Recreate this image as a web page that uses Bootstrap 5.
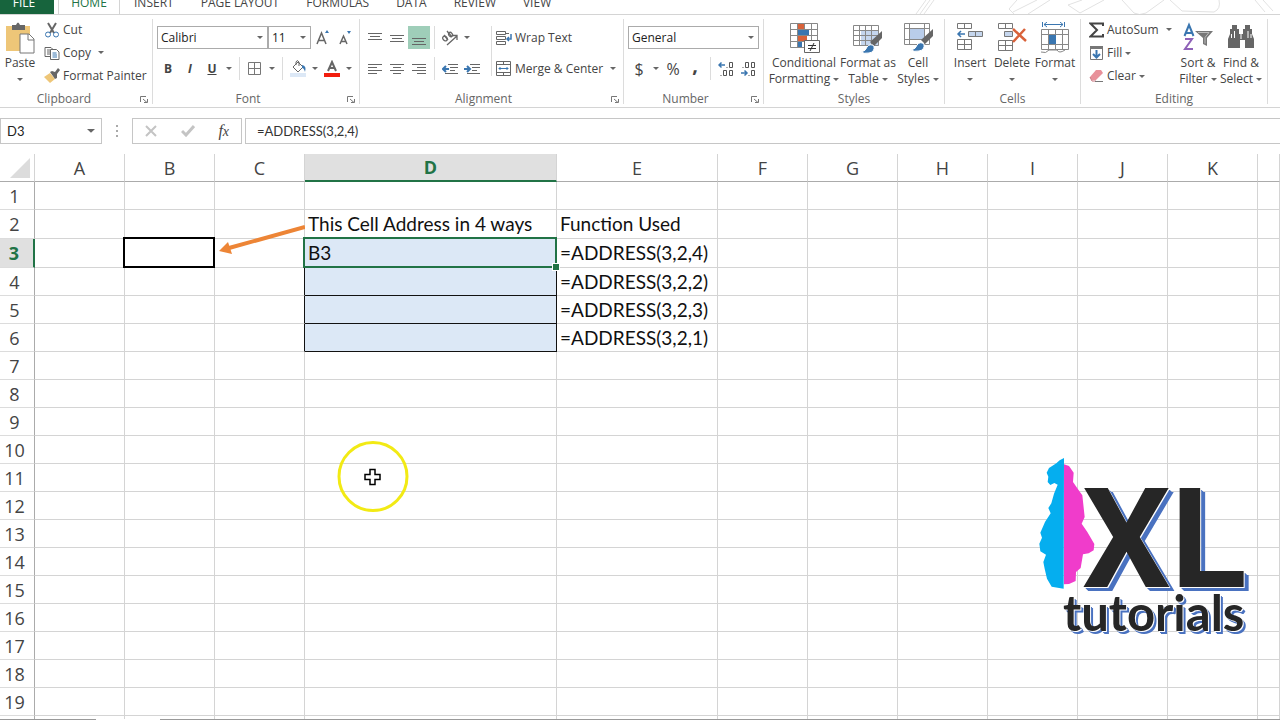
<!DOCTYPE html>
<html lang="en">
<head>
<meta charset="utf-8">
<meta name="viewport" content="width=device-width, initial-scale=1">
<title>XL tutorials - ADDRESS</title>
<link href="https://cdn.jsdelivr.net/npm/bootstrap@5.3.0/dist/css/bootstrap.min.css" rel="stylesheet">
<style>
:root{--xl-green:#217346;--xl-line:#d4d4d4;--xl-ink:#444;--xl-grey:#777;--xl-blue:#3a76b0}
body{font-family:"Open Sans","Noto Sans",sans-serif;font-size:12px;line-height:16px;color:var(--xl-ink);background:#fff}
button{font:inherit;color:inherit;background:none;border:0;padding:0;white-space:nowrap}
svg{display:block;flex:none}
/* tabs */
.tab-strip{height:15px;border-bottom:1px solid var(--xl-line)}
.tab-strip .nav-link{color:var(--xl-ink);padding:0 0 1px;line-height:20px;text-align:center;border-radius:0}
.tab-strip .file-tab{background:#17643d;color:#fff;width:54px;padding-right:6px;margin-right:4px}
.tab-strip .home-tab{color:var(--xl-green);width:62px;border:1px solid var(--xl-line);border-width:0 1px;margin-right:14px}
.tab-list{gap:27px}
.tab-art{right:0;top:0}
/* ribbon */
.ribbon{border-bottom:1px solid var(--xl-line);padding:3px 0 1px}
.ribbon-group{position:relative;height:88px;flex:none;padding-right:1px}
.ribbon-group::after{content:"";position:absolute;right:0;top:1px;bottom:2px;width:1px;background:#dcdcdc}
.g-clip{width:153px}.g-font{width:207px}.g-align{width:264px}.g-num{width:140px}.g-styles{width:181px}.g-cells{width:136px}.g-edit{width:187px}
.tool-area{height:74px}
.group-name{color:#666;line-height:13px;height:13px;text-align:center;position:relative}
.launcher{position:absolute;right:4px;top:4px}
.tool-row{height:23px}
.slot{width:22px;height:23px;display:flex;align-items:center;justify-content:center}
.drop{width:12px;height:20px;display:flex;align-items:center;justify-content:center}
.drop::after,.caret::after{content:"";display:inline-block;border:3px solid transparent;border-top-color:#666;border-bottom:0;vertical-align:2px}
.vline{width:1px;height:23px;background:#dcdcdc}
.big-tool{display:flex;flex-direction:column;align-items:center;padding-top:4px;flex:none}
.big-tool svg{height:32px;margin-bottom:1px}
.small-tool{display:flex;align-items:center;gap:3px;height:23px}
.combo{height:23px;border:1px solid #ababab;border-radius:0;padding:0 3px;font-size:12px;color:#222;appearance:none;background:#fff url("data:image/svg+xml,%3Csvg xmlns='http://www.w3.org/2000/svg' width='6' height='4'%3E%3Cpath d='M0 0h6L3 3z' fill='%23666'/%3E%3C/svg%3E") no-repeat right 4px center}
.active-tool{background:#9fceb9}
/* formula bar */
.formula-bar{padding:10px 0}
.fx-box{height:26px;border:1px solid #c6c6c6;border-radius:0;background-color:#fff;font-size:12px}
.name-box{width:102px;padding:0 6px;background-position:right 6px center;background-size:8px 5px;font-family:Lato,sans-serif;font-size:13px}
.fx-tools{width:110px}
.fx-name{font:italic 400 16px/20px "Liberation Serif",serif}
.fx-input{font-family:Lato,sans-serif;font-size:13px;padding:0 11px;color:#333;border-right:0;min-width:0;margin-left:3px}
/* sheet */
.sheet{min-height:0}
.cells{table-layout:fixed;border-collapse:separate;border-spacing:0;width:100%}
.cells th{font-weight:400;font-size:18px;line-height:26px;padding:0;text-align:center;color:var(--xl-ink)}
.cells thead th{height:28px;border-right:1px solid var(--xl-line);border-bottom:1px solid #ababab}
.cells tbody th{border-right:1px solid #ababab;border-bottom:1px solid #dcdcdc;padding-right:5px}
.cells td{font-family:Lato,sans-serif;font-size:19px;line-height:26px;padding:0 0 0 3px;color:#111;white-space:nowrap;border-right:1px solid var(--xl-line);border-bottom:1px solid var(--xl-line);position:relative}
.cells tr{height:28px}
.cells .tall{height:29px}
.cells th.current{font-weight:700;color:var(--xl-green);background:#e0e0e0}
.cells thead th.current{border-bottom:2px solid var(--xl-green)}
.cells tbody th.current{border-right:2px solid var(--xl-green)}
.cells td.answer{background:#dce8f6;border-color:#111}
.cells td.edge{border-right-color:#111}
.framed::after{content:"";position:absolute;inset:-2px -1px -1px -2px;border:2px solid #000;z-index:1}
.picked::after{border-color:var(--xl-green)}
.fill-handle{position:absolute;right:-3px;bottom:-3px;width:6px;height:6px;background:var(--xl-green);box-shadow:0 0 0 1px #fff;z-index:2}
.link-arrow{position:absolute;right:-1px;top:12px;z-index:1}
.pointer{left:336px;top:286px}
.brand{right:31px;top:303px;width:212px;height:180px;color:#262626}
.brand-face{position:absolute;left:0;top:0}
.brand-xl{position:absolute;left:45px;top:31px;font-family:Roboto,sans-serif;font-weight:700;font-size:140px;line-height:102px;text-shadow:1px 1px 0 #fff,2px 2px 0 #4a72c0,3px 3px 0 #4a72c0,4px 4px 0 #4a72c0,5px 4px 0 #4a72c0}
.brand-sub{position:absolute;left:26px;top:133px;font-family:Lato,sans-serif;font-size:49px;line-height:44px;font-weight:700;text-shadow:1px 1px 0 #fff,2px 2px 0 #4a72c0,3px 3px 0 #4a72c0}
.sheet-foot{height:1px;background:#999}
.sheet-tab{width:64px;height:1px;margin-left:96px;background:#fff}
</style>
</head>
<body class="vh-100 overflow-hidden d-flex flex-column">
<nav class="tab-strip d-flex align-items-end overflow-hidden position-relative flex-shrink-0">
  <svg class="tab-art position-absolute" width="370" height="14" viewBox="0 0 370 14" fill="none" stroke="#e2e2e2"><path d="M6 14 16 0M10 14 20 0M14 14 24 0M104 14l-5-5 8-9M103 12l24-12M118 14l22-14M172 0l-14 5 12 8 24-13M212 0l12 13q5 3 12 0l18-13M260 0l12 11 32 1q7-3 5-12M345 0l10 12M353 0l10 11"/></svg>
  <a class="nav-link file-tab" href="#">FILE</a>
  <a class="nav-link home-tab" href="#">HOME</a>
  <div class="d-flex tab-list">
    <a class="nav-link" href="#">INSERT</a><a class="nav-link" href="#">PAGE LAYOUT</a><a class="nav-link" href="#">FORMULAS</a><a class="nav-link" href="#">DATA</a><a class="nav-link" href="#">REVIEW</a><a class="nav-link" href="#">VIEW</a>
  </div>
</nav>

<header class="ribbon d-flex flex-shrink-0 overflow-hidden">
  <section class="ribbon-group g-clip">
    <div class="tool-area d-flex">
      <button class="big-tool" style="width:40px"><svg width="30" height="32" viewBox="0 0 30 32"><path d="M1 4h24v25H1z" fill="#eec678"/><path d="M7 3h4q2-5 4 0h5v5H7z" fill="#666"/><path d="M15 12h9l5 5v14H15z" fill="#fff" stroke="#777"/><path d="M23 12v6h6" fill="none" stroke="#777"/></svg><span>Paste</span><span class="caret"></span></button>
      <div class="d-flex flex-column ps-1">
        <button class="small-tool"><svg width="16" height="16" viewBox="0 0 16 16" fill="none"><path d="M4 1l6 10M12 1 6 11" stroke="#666" stroke-width="2"/><circle cx="4" cy="12.500" r="2.500" stroke="#3a76b0"/><circle cx="12" cy="12.500" r="2.500" stroke="#3a76b0"/></svg>Cut</button>
        <div class="d-flex align-items-center"><button class="small-tool"><svg width="16" height="16" viewBox="0 0 16 16" fill="#fff" stroke="#666"><path d="M1 2.500h6l2 2v7H1zM3 5h3M3 7h3M3 9h3"/><path d="M6.500 4.500h6l2.500 2.500v7.500H6.500z"/><path d="M8.500 8h4M8.500 10h4.500M8.500 12h4.500" stroke="#3a76b0"/></svg>Copy</button><button class="drop ms-1" aria-label="Copy options"></button></div>
        <button class="small-tool"><svg width="16" height="16" viewBox="0 0 16 16"><path d="M0 9 6 5l5 6-5 4z" fill="#eec678"/><path d="M6 4l2-1 3 1 3-4 2 2-3 4v4l-2 1z" fill="#666"/></svg>Format Painter</button>
      </div>
    </div>
    <div class="group-name pe-4">Clipboard<svg class="launcher" width="8" height="7" viewBox="0 0 8 7" fill="none" stroke="#777"><path d="M.5 6V.5H6M3 3l4 3.500M7.500 3v3.500H4"/></svg></div>
  </section>

  <section class="ribbon-group g-font">
    <div class="tool-area d-flex flex-column gap-2 pt-2 ps-1">
      <div class="tool-row d-flex align-items-center"><select class="combo" aria-label="Font" style="width:111px"><option>Calibri</option></select><select class="combo" aria-label="Size" style="width:43px"><option>11</option></select>
        <button class="slot" aria-label="Grow font"><svg width="16" height="16" viewBox="0 0 16 16"><path d="M3 14 7.500 3 12 14M4.500 10.500h6" fill="none" stroke="#666" stroke-width="1.500"/><path d="M11 3l2-3 2 3z" fill="#3a76b0"/></svg></button><button class="slot" aria-label="Shrink font"><svg width="16" height="16" viewBox="0 0 16 16"><path d="M4 14l3.500-8 3.500 8M5 11.500h5" fill="none" stroke="#666" stroke-width="1.500"/><path d="M11 1l2 3 2-3z" fill="#3a76b0"/></svg></button></div>
      <div class="tool-row d-flex align-items-center">
        <button class="slot fw-bold">B</button><button class="slot fst-italic fw-bold">I</button><button class="slot text-decoration-underline fw-bold">U</button><button class="drop" aria-label="Underline options"></button>
        <span class="vline mx-1"></span>
        <button class="slot" aria-label="Borders"><svg width="14" height="14" viewBox="0 0 14 14" fill="none" stroke="#777"><path d="M.5.5h12v12H.5zM6.500 0v13M0 6.500h13"/></svg></button><button class="drop" aria-label="Border options"></button>
        <span class="vline mx-1"></span>
        <button class="slot" aria-label="Fill color"><svg width="17" height="17" viewBox="0 0 17 17"><path d="M3 7l5-5 5 5-5 5z" fill="#fff" stroke="#666"/><path d="M6 5V2q1-3 3 0v4" fill="none" stroke="#666"/><path d="M12 5q5 1 3 7-1-4-3-4z" fill="#3a76b0"/><path d="M0 13h16v4H0z" fill="#dce8f6"/></svg></button><button class="drop" aria-label="Fill options"></button>
        <button class="slot" aria-label="Font color"><svg width="16" height="17" viewBox="0 0 16 17"><path d="M4 11 8 2l4 9M5.500 8h5" fill="none" stroke="#666" stroke-width="2"/><path d="M0 13h16v4H0z" fill="#f21d0d"/></svg></button><button class="drop" aria-label="Font color options"></button>
      </div>
    </div>
    <div class="group-name pe-3">Font<svg class="launcher" width="8" height="7" viewBox="0 0 8 7" fill="none" stroke="#777"><path d="M.5 6V.5H6M3 3l4 3.500M7.500 3v3.500H4"/></svg></div>
  </section>

  <section class="ribbon-group g-align">
    <div class="tool-area d-flex pt-2 ps-1">
      <div class="d-flex flex-column gap-2">
        <div class="tool-row d-flex align-items-center">
          <button class="slot" aria-label="Top align"><svg width="14" height="17" viewBox="0 0 14 17" stroke="#666"><path d="M0 4.500h14M2 7.500h10M0 10.500h14"/></svg></button><button class="slot" aria-label="Middle align"><svg width="14" height="17" viewBox="0 0 14 17" stroke="#666"><path d="M0 6.500h14M2 9.500h10M0 12.500h14"/></svg></button><button class="slot active-tool" aria-label="Bottom align"><svg width="14" height="17" viewBox="0 0 14 17" stroke="#666"><path d="M0 9.500h14M2 12.500h10M0 15.500h14"/></svg></button>
          <span class="vline mx-1"></span>
          <button class="slot" aria-label="Orientation"><svg width="18" height="16" viewBox="0 0 18 16" fill="none" stroke="#666" stroke-width="1.300"><path d="M6 15 16 6M16 10V5.500h-4"/><ellipse cx="4" cy="8.500" rx="2" ry="2.500" transform="rotate(-40 4 8.500)"/><path d="M3 5l4 5M6 1l5 6"/><ellipse cx="9.500" cy="4.500" rx="1.800" ry="2.300" transform="rotate(-40 9.500 4.500)"/></svg></button><button class="drop" aria-label="Orientation options"></button>
        </div>
        <div class="tool-row d-flex align-items-center">
          <button class="slot" aria-label="Align left"><svg width="14" height="12" viewBox="0 0 14 12" stroke="#666"><path d="M0 1.500h14M0 4.500h9M0 7.500h14M0 10.500h9"/></svg></button><button class="slot" aria-label="Center"><svg width="14" height="12" viewBox="0 0 14 12" stroke="#666"><path d="M0 1.500h14M3 4.500h8M0 7.500h14M3 10.500h8"/></svg></button><button class="slot" aria-label="Align right"><svg width="14" height="12" viewBox="0 0 14 12" stroke="#666"><path d="M0 1.500h14M5 4.500h9M0 7.500h14M5 10.500h9"/></svg></button>
          <span class="vline mx-1"></span>
          <button class="slot" aria-label="Decrease indent"><svg width="16" height="12" viewBox="0 0 16 12" stroke="#666"><path d="M6 1.500h10M8 4.500h8M8 7.500h5M3 10.500h13"/><path d="M7 6H1M4 3 1 6l3 3" fill="none" stroke="#3a76b0" stroke-width="2"/></svg></button><button class="slot" aria-label="Increase indent"><svg width="16" height="12" viewBox="0 0 16 12" stroke="#666"><path d="M6 1.500h10M8 4.500h8M8 7.500h5M3 10.500h13"/><path d="M0 6h6M3 3l3 3-3 3" fill="none" stroke="#3a76b0" stroke-width="2"/></svg></button>
        </div>
      </div>
      <span class="vline h-75 ms-2"></span>
      <div class="d-flex flex-column gap-2 ps-1">
        <button class="small-tool"><svg width="16" height="16" viewBox="0 0 16 16" fill="none" stroke="#666"><path d="M.5 1.500h9v3h-9zM.5 6.500h9v3h-9zM.5 11.500h9v3h-9zM9 3.500h4"/><path d="M15 4v5h-4M13 7l-2 2 2 2" stroke="#3a76b0" stroke-width="1.500"/></svg>Wrap Text</button>
        <div class="d-flex align-items-center"><button class="small-tool"><svg width="16" height="16" viewBox="0 0 16 16" fill="none" stroke="#666"><path d="M.5.5h14v14H.5zM0 3.500h15M0 11.500h15M7.500 0v3.500M7.500 11.500V15"/><path d="M3 7.500h9M4.500 6 3 7.500 4.500 9M10.500 6 12 7.500 10.500 9" stroke="#3a76b0"/></svg>Merge &amp; Center</button><button class="drop ms-1" aria-label="Merge options"></button></div>
      </div>
    </div>
    <div class="group-name pe-3">Alignment<svg class="launcher" width="8" height="7" viewBox="0 0 8 7" fill="none" stroke="#777"><path d="M.5 6V.5H6M3 3l4 3.500M7.500 3v3.500H4"/></svg></div>
  </section>

  <section class="ribbon-group g-num">
    <div class="tool-area d-flex flex-column gap-2 pt-2 px-1">
      <select class="combo w-100" aria-label="Number format"><option>General</option></select>
      <div class="tool-row d-flex align-items-center">
        <button class="slot fs-6">$</button><button class="drop" aria-label="Currency options"></button><button class="slot fs-6">%</button><button class="slot fs-5 fw-bold pb-2">,</button>
        <span class="vline mx-1"></span>
        <button class="slot" aria-label="Increase decimal"><svg width="16" height="16" viewBox="0 0 16 16" fill="none" stroke="#555"><path d="M7 4H1M3.500 1.500 1 4l2.500 2.500" stroke="#3a76b0" stroke-width="1.500"/><path d="M8.500 6.500h1M11.500 1.500h3v5h-3zM2.500 14.500h1M5.500 9.500h3v5h-3zM11.500 9.500h3v5h-3z"/></svg></button><button class="slot" aria-label="Decrease decimal"><svg width="16" height="16" viewBox="0 0 16 16" fill="none" stroke="#555"><path d="M1 12h6M4.500 9.500 7 12l-2.500 2.500" stroke="#3a76b0" stroke-width="1.500"/><path d="M2.500 6.500h1M5.500 1.500h3v5h-3zM11.500 1.500h3v5h-3zM8.500 14.500h1M11.500 9.500h3v5h-3z"/></svg></button>
      </div>
    </div>
    <div class="group-name pe-3">Number<svg class="launcher" width="8" height="7" viewBox="0 0 8 7" fill="none" stroke="#777"><path d="M.5 6V.5H6M3 3l4 3.500M7.500 3v3.500H4"/></svg></div>
  </section>

  <section class="ribbon-group g-styles">
    <div class="tool-area d-flex ps-1">
      <button class="big-tool" style="width:72px"><svg width="32" height="32" viewBox="0 0 32 32"><path d="M2.500 1.500h27v24h-27zM2 7.500h27M2 13.500h27M2 19.500h27M9.500 1v24M16.500 1v24M23.500 1v24" fill="#fff" stroke="#888"/><path d="M10 2h6v5h-6zM10 14h9v5h-9z" fill="#d9623a"/><path d="M10 8h11v5H10zM10 20h4v5h-4z" fill="#3a76b0"/><path d="M16.500 18.500h15v12h-15z" fill="#fff" stroke="#666"/><path d="M20 23.500h8M20 26.500h8M26 21l-4 8" stroke="#333"/></svg><span>Conditional</span><span>Formatting <i class="caret"></i></span></button>
      <button class="big-tool" style="width:56px"><svg width="32" height="32" viewBox="0 0 32 32"><path d="M9 8h18v16H9z" fill="#c5d6ee"/><path d="M1.500 3.500h25v20h-25zM1 8.500h25M1 13.500h25M1 18.500h25M7.500 3v20M13.500 3v20M19.500 3v20" fill="none" stroke="#888"/><path d="M18 20 30 9v7l-8 8z" fill="#666"/><path d="M9 30q5-1 6-5 3-4 7-1 1 6-5 7-5 1-8-1z" fill="#3a76b0" stroke="#fff"/></svg><span>Format as</span><span>Table <i class="caret"></i></span></button>
      <button class="big-tool" style="width:44px"><svg width="32" height="32" viewBox="0 0 32 32"><path d="M2.500 1.500h25v21h-25zM2 6.500h25M2 17.500h25M7.500 1v21M22.500 1v21" fill="none" stroke="#888"/><path d="M8 7h14v10H8z" fill="#b9cdea"/><path d="M19 18 31 7v7l-8 8z" fill="#666"/><path d="M9 28q5-1 6-5 3-4 7-1 1 6-5 7-5 1-8-1z" fill="#3a76b0" stroke="#fff"/></svg><span>Cell</span><span>Styles <i class="caret"></i></span></button>
    </div>
    <div class="group-name">Styles</div>
  </section>

  <section class="ribbon-group g-cells">
    <div class="tool-area d-flex ps-1">
      <button class="big-tool" style="width:42px"><svg width="28" height="32" viewBox="0 0 28 32" fill="none" stroke="#777"><path d="M1.500 1.500h14v5h-14zM8.500 1v5M1.500 17.500h14v10h-14zM8.500 17v10M1 22.500h14"/><path d="M12.500 9.500h14v5h-14zM19.500 9v5" fill="#c5d6ee"/><path d="M9 12H2M5 9l-3 3 3 3" stroke="#3a76b0" stroke-width="1.500"/></svg><span>Insert</span><span class="caret"></span></button>
      <button class="big-tool" style="width:42px"><svg width="30" height="32" viewBox="0 0 30 32" fill="none" stroke="#777"><path d="M1.500 1.500h14v5h-14zM8.500 1v5M1.500 18.500h14v10h-14zM8.500 18v10M1 23.500h14"/><path d="M7.500 9.500h8v5h-8z" fill="#c5d6ee"/><path d="M16 7l13 12M28 7 16 20" stroke="#d9623a" stroke-width="2.500"/></svg><span>Delete</span><span class="caret"></span></button>
      <button class="big-tool" style="width:44px"><svg width="30" height="32" viewBox="0 0 30 32" fill="none" stroke="#888"><path d="M1.500 7.500h27v20h-27zM1 12.500h27M1 22.500h27M8.500 7v20M15.500 7v20M22.500 7v20M1 30q5 2 8-2h8q2 4 8 0"/><path d="M9 13h7v9H9z" fill="#3a76b0" stroke="none"/><path d="M2.500 0v5M24.500 0v5M4 2.500h19M7 0 4 2.500 7 5M20 0l3 2.500L20 5" stroke="#3a76b0"/></svg><span>Format</span><span class="caret"></span></button>
    </div>
    <div class="group-name">Cells</div>
  </section>

  <section class="ribbon-group g-edit">
    <div class="tool-area d-flex ps-2">
      <div class="d-flex flex-column" style="width:87px">
        <div class="d-flex align-items-center"><button class="small-tool"><svg width="15" height="16" viewBox="0 0 15 16"><path d="M14 4V1.500H1.500L8 8l-6.500 6.500H14V12" fill="none" stroke="#444" stroke-width="2"/></svg>AutoSum</button><button class="drop ms-1" aria-label="AutoSum options"></button></div>
        <button class="small-tool"><svg width="15" height="16" viewBox="0 0 15 16"><path d="M1.500 1.500h12v13h-12z" fill="#fff" stroke="#777"/><path d="M1 1h13v3H1z" fill="#777"/><path d="M7.500 5v7M4 9l3.500 3.500L11 9" fill="none" stroke="#3a76b0" stroke-width="2"/></svg><span>Fill <i class="caret"></i></span></button>
        <button class="small-tool"><svg width="15" height="16" viewBox="0 0 15 16"><path d="M7 2h5l2 3-7 7H3L1 9z" fill="#e8919a"/><path d="M1 9l2 4h4" fill="none" stroke="#c8707a"/><path d="M6 13.500h8" stroke="#777"/></svg><span>Clear <i class="caret"></i></span></button>
      </div>
      <button class="big-tool" style="width:44px"><svg width="30" height="32" viewBox="0 0 30 32" fill="none"><path d="M1.500 14 6 3l4.500 11M3 11h6" stroke="#3a76b0" stroke-width="2"/><path d="M2 17h7L2 27h8" stroke="#8f62b8" stroke-width="2"/><path d="M12 9h18l-6 7v8l-4-2v-6z" fill="#777"/><path d="M15 10.500h11l-4 5v6" stroke="#bbb"/></svg><span>Sort &amp;</span><span>Filter <i class="caret"></i></span></button>
      <button class="big-tool" style="width:42px"><svg width="28" height="32" viewBox="0 0 28 32" fill="#666"><path d="M5 3h5v4h2v5h4V7h2V3h5v4h2v5l2 5v9h-9v-8h-5v8H1v-9l2-5V7h2z"/><path d="M4.500 12v4M7.500 9v7M24 12v4M21 9v7M14 12v5" stroke="#fff"/></svg><span>Find &amp;</span><span>Select <i class="caret"></i></span></button>
    </div>
    <div class="group-name">Editing</div>
  </section>
</header>

<div class="formula-bar d-flex align-items-center flex-shrink-0">
  <select class="fx-box combo name-box" aria-label="Name box"><option>D3</option></select>
  <svg class="mx-2" width="14" height="14" viewBox="0 0 14 14" fill="#aaa"><path d="M6 1h2v2H6zM6 6h2v2H6zM6 11h2v2H6z"/></svg>
  <div class="fx-box fx-tools d-flex align-items-center justify-content-around">
    <button aria-label="Cancel"><svg width="12" height="12" viewBox="0 0 12 12" stroke="#c4c4c4" stroke-width="2"><path d="M1 1l10 10M11 1 1 11"/></svg></button>
    <button aria-label="Enter"><svg width="14" height="12" viewBox="0 0 14 12" fill="none" stroke="#c4c4c4" stroke-width="3"><path d="M1 6l4 4 8-9"/></svg></button>
    <button class="fx-name" aria-label="Insert function">f<small>x</small></button>
  </div>
  <input class="fx-box fx-input flex-fill" aria-label="Formula" value="=ADDRESS(3,2,4)">
</div>

<main class="sheet flex-fill position-relative overflow-hidden">
  <table class="cells">
    <colgroup id="cols"></colgroup>
    <thead><tr id="heads"></tr></thead>
    <tbody id="rows"></tbody>
  </table>
  <svg class="pointer position-absolute" width="74" height="74" viewBox="0 0 74 74"><circle cx="37" cy="36.500" r="34" fill="none" stroke="#f2ea14" stroke-width="3"/><path d="M34 29.500h5v5h5v5h-5v5h-5v-5h-5v-5h5z" fill="#fff" stroke="#000" stroke-width="1.500"/></svg>
  <div class="brand position-absolute">
    <svg class="brand-face" width="60" height="134" viewBox="50 35 180 402"><path d="M131 38 118 45 108 54 86 68 79 82 84 94 82 110 90 119 102 113 112 118 101 145 93 174 84 188 91 204 74 230 60 262 65 277 57 295 60 318 77 328 69 350 73 370 80 400 94 424 130 430z" fill="#05aeef"/><path d="M131 57 146 62 160 82 158 110 173 132 186 150 193 215 184 235 201 260 222 296 220 315 205 324 188 327 181 368 167 380 166 407 146 416 131 417z" fill="#f03ccb"/></svg>
    <span class="brand-xl">XL</span>
    <span class="brand-sub">tutorials</span>
  </div>
</main>
<footer class="sheet-foot flex-shrink-0"><div class="sheet-tab"></div></footer>

<script>
const widths = [35, 90, 90, 90, 252, 161, 90, 90, 90, 90, 90, 90, null];
const letters = ['A','B','C','D','E','F','G','H','I','J','K',''];
const values = {
  D2: 'This Cell Address in 4 ways', E2: 'Function Used', D3: 'B3',
  E3: '=ADDRESS(3,2,4)', E4: '=ADDRESS(3,2,2)', E5: '=ADDRESS(3,2,3)', E6: '=ADDRESS(3,2,1)'
};
const classes = {
  B3: 'framed', D3: 'answer framed picked', D4: 'answer', D5: 'answer', D6: 'answer',
  C4: 'edge', C5: 'edge', C6: 'edge'
};
const extras = {
  C2: '<svg class="link-arrow" width="90" height="34" viewBox="0 0 90 34"><path d="M90 5 14 26" stroke="#ed8536" stroke-width="4"/><path d="M4 29 13 20l4 12z" fill="#ed8536"/></svg>',
  D3: '<span class="fill-handle"></span>'
};
document.getElementById('cols').innerHTML = widths.map(w => w ? `<col style="width:${w}px">` : '<col>').join('');
document.getElementById('heads').innerHTML =
  '<th><svg class="ms-auto me-1" width="20" height="20"><path d="M20 0v20H0z" fill="#dcdcdc"/></svg></th>' +
  letters.map(l => `<th class="${l === 'D' ? 'current' : ''}">${l}</th>`).join('');
let html = '';
for (let r = 1; r <= 20; r++) {
  html += `<tr class="${r === 2 || r === 3 ? 'tall' : ''}"><th class="${r === 3 ? 'current' : ''}">${r < 20 ? r : ''}</th>`;
  for (const l of letters) {
    const id = l + r;
    html += `<td class="${classes[id] || ''}">${values[id] || ''}${extras[id] || ''}</td>`;
  }
  html += '</tr>';
}
document.getElementById('rows').innerHTML = html;
</script>
<script src="https://cdn.jsdelivr.net/npm/bootstrap@5.3.0/dist/js/bootstrap.bundle.min.js"></script>
</body>
</html>
